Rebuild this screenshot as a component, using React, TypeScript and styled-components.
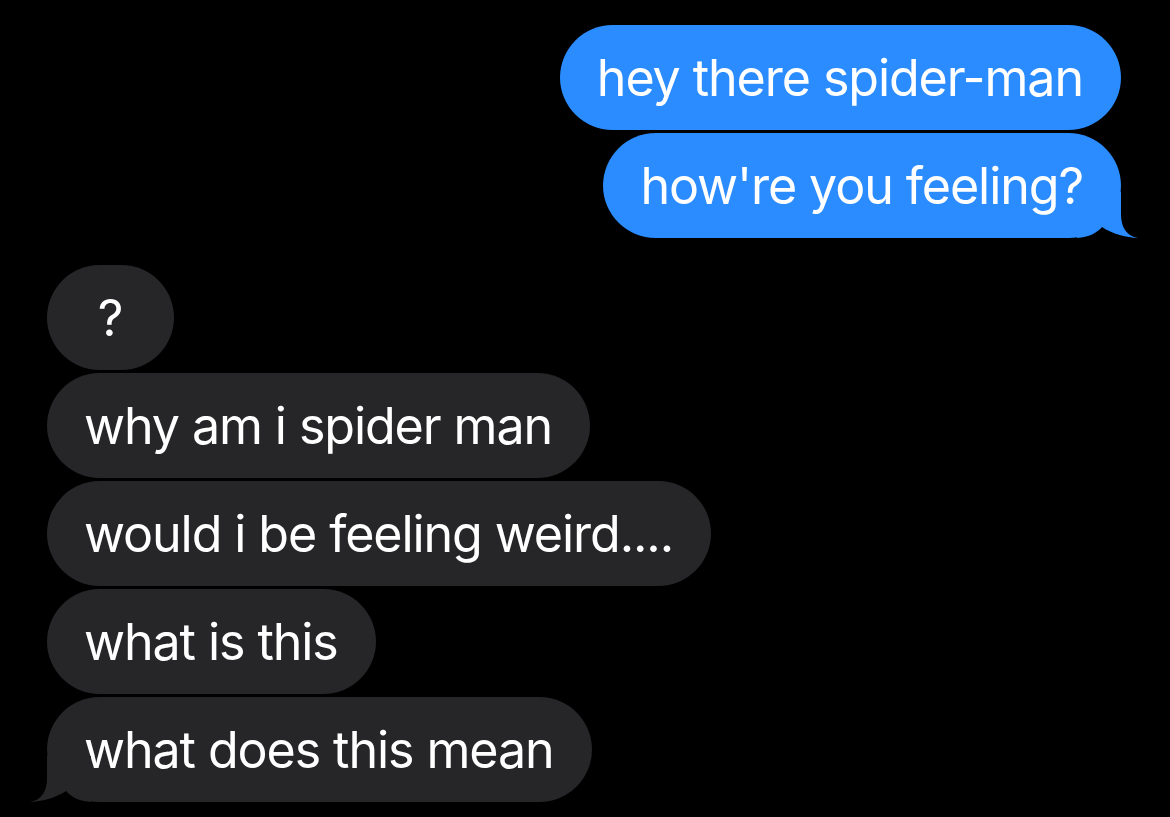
import React from "react";
import styled, { createGlobalStyle, css } from "styled-components";

const GlobalStyle = createGlobalStyle`
  html, body {
    margin: 0;
    padding: 0;
    background: #000;
  }
  body {
    font-family: Inter, "Liberation Sans", Arial, sans-serif;
    -webkit-font-smoothing: antialiased;
  }
`;

type Side = "me" | "them";

const Thread = styled.main`
  width: 1170px;
  height: 817px;
  box-sizing: border-box;
  background: #000;
  padding: 25px 49px 0 47px;
  display: flex;
  flex-direction: column;
  gap: 27px;
  overflow: hidden;
`;

const Group = styled.section<{ $side: Side }>`
  display: flex;
  flex-direction: column;
  gap: 3px;
  align-items: ${(p) => (p.$side === "me" ? "flex-end" : "flex-start")};
`;

const Bubble = styled.div<{ $side: Side }>`
  position: relative;
  box-sizing: border-box;
  min-width: 127px;
  height: 105px;
  padding: 0 38px 0 37px;
  border-radius: 53px;
  font-family: Inter, "Liberation Sans", Arial, sans-serif;
  font-weight: 400;
  font-size: 50.2px;
  letter-spacing: -0.022em;
  line-height: 105px;
  color: #ffffff;
  text-align: center;
  white-space: nowrap;
  background: ${(p) => (p.$side === "me" ? "#2a8cff" : "#262629")};
`;

const TailSvg = styled.svg<{ $side: Side }>`
  position: absolute;
  bottom: 0;
  width: 62px;
  height: 50px;
  overflow: visible;
  ${(p) =>
    p.$side === "me"
      ? css`
          right: -18px;
        `
      : css`
          left: -18px;
          transform: scaleX(-1);
        `}
`;

const Tail = ({ side, color }: { side: Side; color: string }) => (
  <TailSvg $side={side} viewBox="-44 -50 62 50">
    <path
      fill={color}
      d="M 0,-46 L 0,-24 C 0,-10 6,-2 17,0 C 6,-0.5 -9,-4 -19,-11 C -24,-5 -32,-1 -44,0 L -44,-46 Z"
    />
  </TailSvg>
);

type Msg = { text: string; tail?: boolean };

const mine: Msg[] = [
  { text: "hey there spider-man" },
  { text: "how're you feeling?", tail: true },
];

const theirs: Msg[] = [
  { text: "?" },
  { text: "why am i spider man" },
  { text: "would i be feeling weird...." },
  { text: "what is this" },
  { text: "what does this mean", tail: true },
];

const colorFor = (side: Side) => (side === "me" ? "#2a8cff" : "#262629");

const MessageGroup = ({ side, msgs }: { side: Side; msgs: Msg[] }) => (
  <Group $side={side}>
    {msgs.map((m, i) => (
      <Bubble key={i} $side={side}>
        {m.tail && <Tail side={side} color={colorFor(side)} />}
        {m.text}
      </Bubble>
    ))}
  </Group>
);

export default function App() {
  return (
    <>
      <GlobalStyle />
      <Thread>
        <MessageGroup side="me" msgs={mine} />
        <MessageGroup side="them" msgs={theirs} />
      </Thread>
    </>
  );
}
